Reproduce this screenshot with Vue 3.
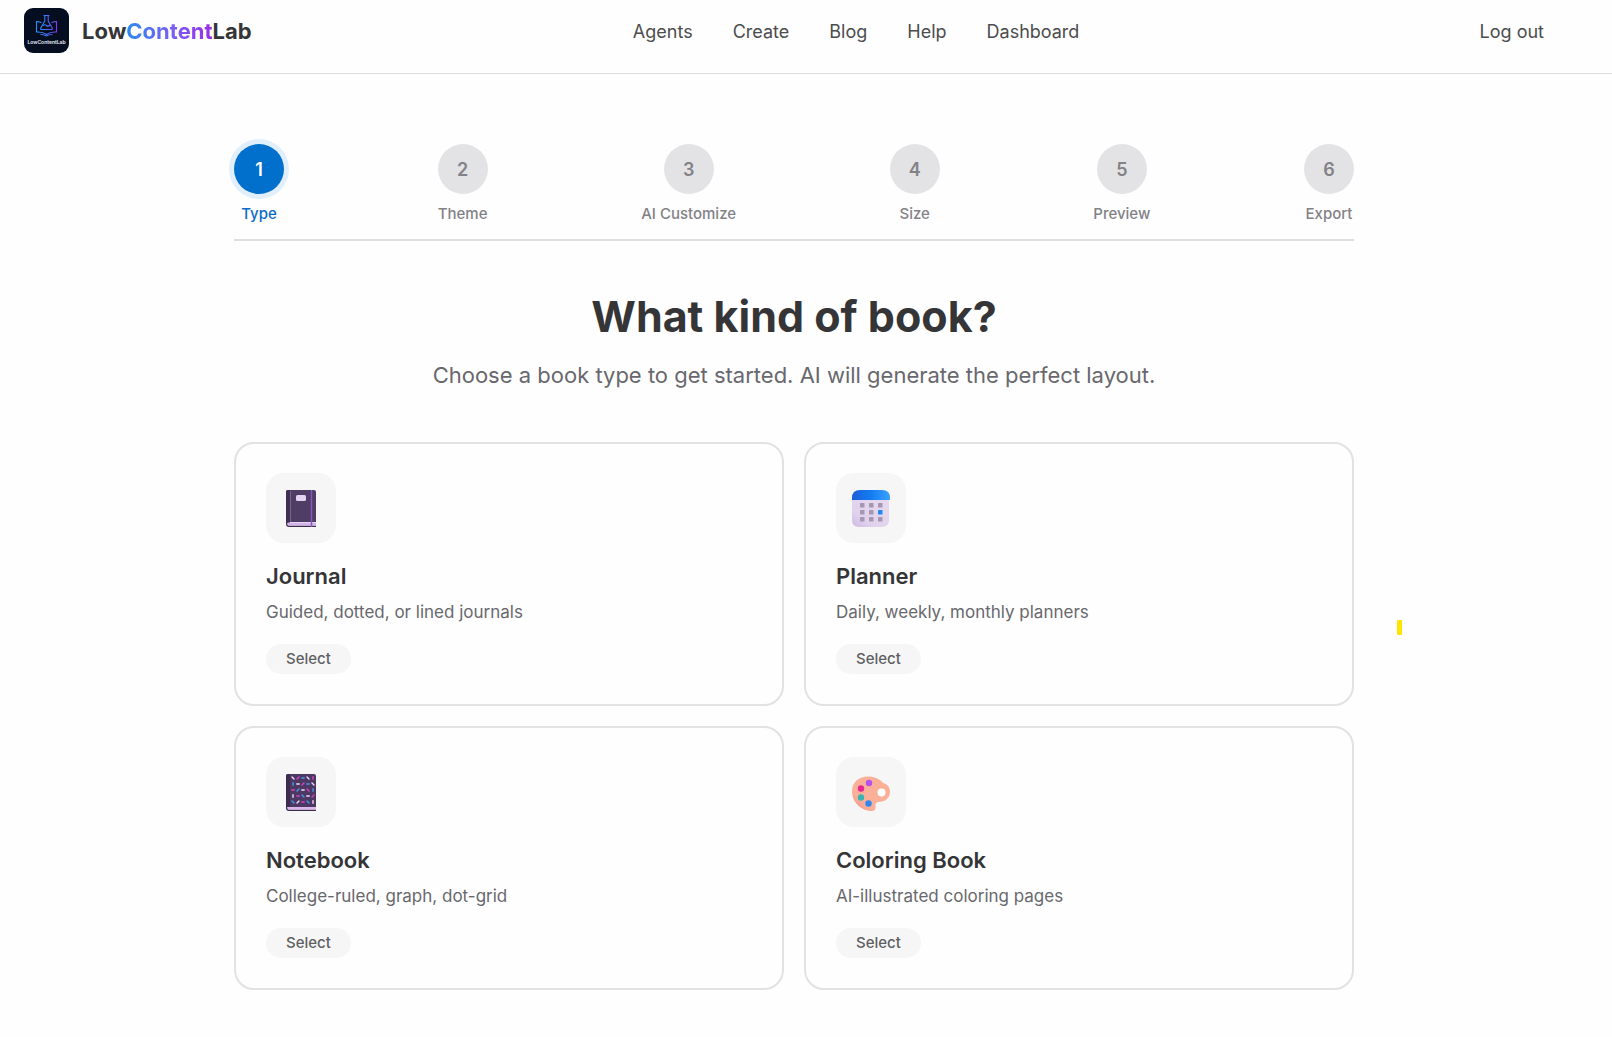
<script setup>
const navLinks = ['Agents', 'Create', 'Blog', 'Help', 'Dashboard']
const steps = ['Type', 'Theme', 'AI Customize', 'Size', 'Preview', 'Export']
const currentStep = 0

const books = [
  { id: 'journal', title: 'Journal', text: 'Guided, dotted, or lined journals' },
  { id: 'planner', title: 'Planner', text: 'Daily, weekly, monthly planners' },
  { id: 'notebook', title: 'Notebook', text: 'College-ruled, graph, dot-grid' },
  { id: 'coloring', title: 'Coloring Book', text: 'AI-illustrated coloring pages' },
]

// Confetti dashes on the notebook cover: w white, p pink, b blue, then the slant
const pattern = [
  ['w\\', 'p/', 'b-', 'w\\', 'p|'],
  ['b|', 'w-', 'p/', 'b-', 'w\\'],
  ['p-', 'b/', 'w-', 'p\\', 'b|'],
  ['w|', 'p-', 'b\\', 'w-', 'p/'],
  ['b\\', 'w/', 'p-', 'b\\', 'w|'],
]
const inks = { w: '#eedcf8', p: '#d844c0', b: '#3f9cec' }
const slants = { '\\': [1, 1], '/': [1, -1], '-': [1.2, 0], '|': [0, 1.2] }
const dashes = pattern.flatMap((cells, row) =>
  cells.map(([ink, slant], col) => {
    const [dx, dy] = slants[slant]
    const x = 11 + col * 5
    const y = 5 + row * 6
    return { x1: x - dx, y1: y - dy, x2: x + dx, y2: y + dy, ink: inks[ink] }
  }),
)
</script>

<template>
  <div class="page">
    <header class="header">
      <a href="#" class="brand">
        <svg class="logo" viewBox="0 0 45 45" aria-hidden="true">
          <defs>
            <linearGradient id="logoInk" x1="11" y1="0" x2="34" y2="0" gradientUnits="userSpaceOnUse">
              <stop offset="0" stop-color="#1e9bff" />
              <stop offset="0.5" stop-color="#3f74f8" />
              <stop offset="1" stop-color="#9333ea" />
            </linearGradient>
          </defs>
          <rect width="45" height="45" rx="9" fill="#050d20" />
          <g fill="none" stroke="url(#logoInk)" stroke-width="1.1" stroke-linejoin="round" stroke-linecap="round">
            <path d="M20 7.500h5M20.800 7.500v5.500l-4 7q-.6 1.500 1 1.500h9.400q1.600 0 1-1.500l-4-7v-5.500" />
            <path d="M19 17.500q2-1.500 3.500 0t3.500-.5" />
            <path d="M17 14.500q-2-1-4.500-1v10.500q6-.5 10 2.500q4-3 10-2.500v-10.500q-2.500 0-4.500 1" />
            <path d="M17 26.500q3 0 5.500 1.500q2.500-1.500 5.500-1.500" />
          </g>
          <text x="22.500" y="35.500" text-anchor="middle" font-family="Inter, sans-serif" font-size="5" font-weight="600" fill="#e8edf5">LowContentLab</text>
        </svg>
        <span class="wordmark">Low<span class="accent">Content</span>Lab</span>
      </a>
      <nav class="nav">
        <a v-for="link in navLinks" :key="link" href="#">{{ link }}</a>
      </nav>
      <a href="#" class="logout">Log out</a>
    </header>

    <main class="main">
      <ol class="steps">
        <li v-for="(step, i) in steps" :key="step" class="step" :class="{ active: i === currentStep }">
          <span class="circle">{{ i + 1 }}</span>
          <span class="label">{{ step }}</span>
        </li>
      </ol>

      <h1>What kind of book?</h1>
      <p class="lead">Choose a book type to get started. AI will generate the perfect layout.</p>

      <section class="grid">
        <article v-for="book in books" :key="book.id" class="card">
          <div class="tile">
            <svg v-if="book.id === 'journal'" viewBox="0 0 38 38" aria-hidden="true">
              <path d="M6 1h26q2 0 2 2V33H4V3q0-2 2-2z" fill="#4f3d66" />
              <path d="M6 1h2V34H4V3q0-2 2-2z" fill="#3f3052" />
              <path d="M8.500 2v31" stroke="#79658b" stroke-width="1" />
              <path d="M6.500 33.500H34v3H6.500q-1.500 0-1.500-1.500t1.500-1.500z" fill="#d5b3ea" />
              <path d="M4.600 33v2q0 2.400 2.400 2.400H34" fill="none" stroke="#3f3052" stroke-width="1.200" />
              <rect x="14" y="6" width="10" height="6" rx="1.500" fill="#e2d3ee" />
              <path d="M29.500 1v37" stroke="#8358bf" stroke-width="1.500" />
            </svg>
            <svg v-else-if="book.id === 'planner'" viewBox="0 0 38 38" aria-hidden="true">
              <defs>
                <linearGradient id="calTop" x1="0" y1="0" x2="1" y2="0">
                  <stop offset="0" stop-color="#1c5fd8" />
                  <stop offset="0.500" stop-color="#147cf2" />
                  <stop offset="1" stop-color="#3aa2fb" />
                </linearGradient>
                <linearGradient id="calBody" x1="0" y1="1" x2="1" y2="0">
                  <stop offset="0" stop-color="#cdb8e6" />
                  <stop offset="0.300" stop-color="#e0d2ec" />
                  <stop offset="1" stop-color="#e6daef" />
                </linearGradient>
              </defs>
              <path d="M0 10h37v21q0 7-7 7H7q-7 0-7-7z" fill="url(#calBody)" />
              <path d="M0 11V9q0-8 8-8h22q8 0 8 8v2z" fill="url(#calTop)" />
              <rect v-for="n in 9" :key="n" :x="8 + ((n - 1) % 3) * 9" :y="14 + Math.floor((n - 1) / 3) * 7" width="4.500" height="4.500" rx="0.500" :fill="n === 6 ? '#1f8af5' : '#a596b2'" />
            </svg>
            <svg v-else-if="book.id === 'notebook'" viewBox="0 0 38 38" aria-hidden="true">
              <path d="M6 1h26q2 0 2 2V34H4V3q0-2 2-2z" fill="#4c3862" />
              <path d="M6 1h2V34H4V3q0-2 2-2z" fill="#3c2d4f" />
              <path d="M6.500 34H34v2.500H6.500q-1.500 0-1.500-1.200t1.500-1.300z" fill="#dcb6ec" />
              <path d="M4.600 33v2q0 2.400 2.400 2.400H34" fill="none" stroke="#3c2d4f" stroke-width="1.200" />
              <line v-for="(d, i) in dashes" :key="i" :x1="d.x1" :y1="d.y1" :x2="d.x2" :y2="d.y2" :stroke="d.ink" stroke-width="1.400" stroke-linecap="round" />
            </svg>
            <svg v-else viewBox="0 0 38 38" aria-hidden="true">
              <defs>
                <linearGradient id="wood" x1="0" y1="1" x2="1" y2="0">
                  <stop offset="0" stop-color="#f58f86" />
                  <stop offset="0.300" stop-color="#fbb09b" />
                  <stop offset="1" stop-color="#f9ae94" />
                </linearGradient>
              </defs>
              <path fill="url(#wood)" d="M16 3.500C6 3.500 0 10 0 18.500C0 29 9 38 20 38q4 0 3.500-4.500q-.5-4.500 3-4.500C33 29 38 25 38 18.500C38 14 35 11 31 10C28 6 22 3.500 16 3.500z" />
              <circle cx="29.500" cy="19.500" r="4" fill="#fff" />
              <circle cx="17" cy="10" r="3.200" fill="#b352ee" />
              <circle cx="9" cy="15.500" r="3.200" fill="#e62692" />
              <circle cx="9" cy="24.500" r="3.200" fill="#35b5b0" />
              <circle cx="16.500" cy="30.500" r="3.200" fill="#2f86ee" />
            </svg>
          </div>
          <h2>{{ book.title }}</h2>
          <p>{{ book.text }}</p>
          <button type="button">Select</button>
        </article>
      </section>
    </main>
    <span class="marker" aria-hidden="true"></span>
  </div>
</template>

<style>
body {
  margin: 0;
  background: #fefefe;
}
</style>

<style scoped>
.page {
  position: relative;
  font-family: Inter, "Liberation Sans", sans-serif;
  color: #353538;
}

a {
  color: inherit;
  text-decoration: none;
}

.header {
  display: flex;
  align-items: flex-start;
  justify-content: space-between;
  padding: 8px 68px 18px 24px;
  border-bottom: 1px solid #dedee0;
}

.brand {
  display: flex;
  align-items: flex-start;
  gap: 13px;
}

.logo {
  display: block;
  width: 45px;
  height: 45px;
}

.wordmark {
  font-size: 22px;
  line-height: 47px;
  font-weight: 700;
}

.accent {
  background: linear-gradient(90deg, #2b8af0, #7a5cf5 55%, #9a2bea);
  background-clip: text;
  color: transparent;
}

.nav {
  display: flex;
  gap: 40px;
}

.nav a,
.logout {
  font-size: 18px;
  line-height: 47px;
  font-weight: 400;
  color: #4c4c4e;
}

.logout {
  padding-left: 19px;
}

.main {
  max-width: 1120px;
  margin: 0 auto;
  padding: 70px 24px 48px 0;
}

.steps {
  display: flex;
  justify-content: space-between;
  margin: 0;
  padding: 0 0 15px;
  border-bottom: 2px solid #e0e0e3;
  list-style: none;
}

.step {
  display: flex;
  flex-direction: column;
  align-items: center;
  gap: 10px;
  color: #828287;
}

.circle {
  width: 50px;
  height: 50px;
  border-radius: 50%;
  background: #e3e3e5;
  font-size: 18px;
  line-height: 52px;
  font-weight: 600;
  text-align: center;
}

.label {
  font-size: 15px;
  line-height: 20px;
  font-weight: 500;
}

.active {
  color: #0a6ac8;
}

.active .circle {
  background: #0070cc;
  box-shadow: 0 0 0 5px #e1effc;
  color: #fff;
}

h1 {
  margin: 48px 0 0;
  font-size: 43px;
  line-height: 54px;
  font-weight: 700;
  text-align: center;
}

.lead {
  margin: 16px 0 0;
  font-size: 22px;
  line-height: 32px;
  color: #68686d;
  text-align: center;
}

.grid {
  display: grid;
  grid-template-columns: 1fr 1fr;
  gap: 20px;
  margin-top: 51px;
}

.card {
  display: flex;
  flex-direction: column;
  align-items: flex-start;
  padding: 29px 30px 30px;
  border: 2px solid #e2e2e4;
  border-radius: 20px;
}

.tile {
  display: grid;
  place-items: center;
  width: 70px;
  height: 70px;
  border-radius: 18px;
  background: #f6f6f7;
}

.tile svg {
  width: 38px;
  height: 38px;
}

h2 {
  margin: 18px 0 0;
  font-size: 22px;
  line-height: 30px;
  font-weight: 600;
}

.card p {
  margin: 7px 0 0;
  font-size: 17px;
  line-height: 28px;
  color: #68686d;
}

.card button {
  margin-top: 18px;
  padding: 0 20px;
  border: 0;
  border-radius: 16px;
  background: #f6f6f7;
  font-family: inherit;
  font-size: 15px;
  line-height: 30px;
  font-weight: 500;
  color: #5f5f63;
}

.marker {
  position: absolute;
  top: 620px;
  left: calc(50% + 591px);
  width: 5px;
  height: 15px;
  border-radius: 1px;
  background: #ffe600;
}
</style>
